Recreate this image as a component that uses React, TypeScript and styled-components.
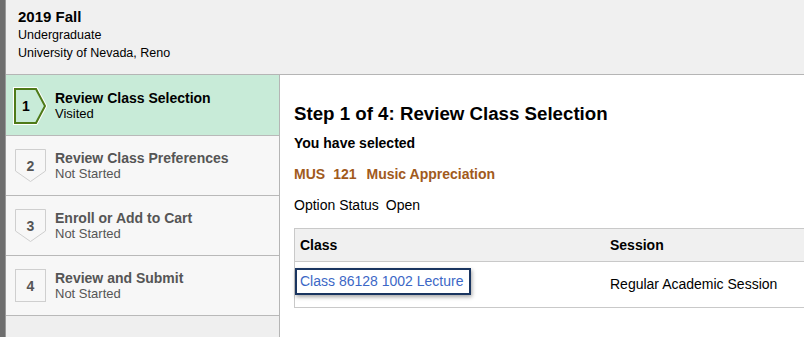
import React from "react";
import styled, { createGlobalStyle } from "styled-components";

const Global = createGlobalStyle`
  html, body { margin: 0; padding: 0; background: #ffffff; }
  body { font-family: Arial, "Liberation Sans", Helvetica, sans-serif; color: #000; }
`;

const Page = styled.div`
  display: flex;
  width: 804px;
  height: 337px;
  overflow: hidden;
`;

const SideStripe = styled.div`
  width: 5px;
  flex: 0 0 5px;
  background: #6e6e6e;
  border-right: 1px solid #9a9a9a;
`;

const Main = styled.div`
  flex: 1;
  display: flex;
  flex-direction: column;
  min-width: 0;
`;

const Header = styled.div`
  height: 75px;
  box-sizing: border-box;
  background: #f0f0f0;
  border-bottom: 1px solid #b5b5b5;
  padding: 8px 0 0 12px;
  flex: 0 0 auto;
`;

const Term = styled.div`
  font-weight: bold;
  font-size: 15px;
  line-height: 18px;
`;

const HeaderLine = styled.div`
  font-size: 12.5px;
  line-height: 18px;
`;

const Body = styled.div`
  display: flex;
  flex: 1;
  min-height: 0;
`;

const Nav = styled.div`
  width: 273px;
  flex: 0 0 273px;
  background: #efefef;
  border-right: 1px solid #b5b5b5;
  display: flex;
  flex-direction: column;
`;

const StepRow = styled.div<{ $active?: boolean }>`
  height: ${(p) => (p.$active ? "61px" : "60px")};
  box-sizing: border-box;
  display: flex;
  align-items: center;
  gap: 8px;
  padding-left: ${(p) => (p.$active ? "7px" : "9px")};
  padding-top: ${(p) => (p.$active ? "1px" : "0")};
  background: ${(p) => (p.$active ? "#c8ebd8" : "#f7f7f7")};
  border-bottom: 1px solid #b9b9b9;
  color: ${(p) => (p.$active ? "#000" : "#555")};
`;

const Badge = styled.div<{ $w: number; $h: number }>`
  position: relative;
  width: ${(p) => p.$w}px;
  height: ${(p) => p.$h}px;
  flex: 0 0 auto;
  svg { position: absolute; inset: 0; }
`;

const BadgeNum = styled.span<{ $w: number; $top: number }>`
  position: absolute;
  left: 0;
  top: ${(p) => p.$top}px;
  width: ${(p) => p.$w}px;
  text-align: center;
  font-weight: bold;
  font-size: 14px;
  line-height: 16px;
`;

const StepText = styled.div`
  display: flex;
  flex-direction: column;
`;

const StepTitle = styled.div`
  font-weight: bold;
  font-size: 14px;
  line-height: 16px;
`;

const StepStatus = styled.div`
  font-size: 13px;
  line-height: 15px;
`;

const Content = styled.div`
  flex: 1;
  min-width: 0;
  background: #fff;
  padding: 27px 0 0 14px;
`;

const Title = styled.h1`
  margin: 0;
  font-size: 18.7px;
  line-height: 23px;
  font-weight: bold;
`;

const Selected = styled.div`
  margin-top: 10px;
  font-size: 14px;
  font-weight: bold;
  line-height: 16px;
`;

const Course = styled.div`
  display: flex;
  margin-top: 15px;
  font-size: 14px;
  font-weight: bold;
  color: #a15a1c;
  line-height: 16px;
`;

const CoursePart = styled.span<{ $gap: number }>`
  margin-right: ${(p) => p.$gap}px;
`;

const Option = styled.div`
  display: flex;
  gap: 7px;
  margin-top: 15px;
  font-size: 14px;
  line-height: 16px;
`;

const Table = styled.div`
  margin-top: 15px;
  border: 1px solid #c9c9c9;
  border-right: none;
  width: 520px;
`;

const TRow = styled.div<{ $head?: boolean }>`
  display: grid;
  grid-template-columns: 309px 1fr;
  align-items: center;
  height: ${(p) => (p.$head ? "32px" : "45px")};
  background: ${(p) => (p.$head ? "#f0f0f0" : "#fff")};
  border-bottom: ${(p) => (p.$head ? "1px solid #c9c9c9" : "none")};
  font-size: 14px;
  font-weight: ${(p) => (p.$head ? "bold" : "normal")};
`;

const Cell = styled.div<{ $pad: number }>`
  padding-left: ${(p) => p.$pad}px;
  padding-bottom: 1px;
`;

const LinkBox = styled.a`
  display: inline-block;
  margin-top: -5px;
  padding: 3px 6px 4px 3px;
  border: 2px solid #1a3560;
  box-shadow: 1px 2px 4px rgba(0, 0, 0, 0.35);
  color: #3c67c6;
  text-decoration: none;
  font-size: 14px;
  line-height: 16px;
`;

function ActiveBadge() {
  return (
    <Badge $w={34} $h={38}>
      <svg width="34" height="38" viewBox="0 0 34 38">
        <polygon points="2,2 23,2 32,19 23,36 2,36" fill="#c8ebd8" stroke="#fff" strokeWidth="4" strokeLinejoin="miter" />
        <polygon points="2,2 23,2 32,19 23,36 2,36" fill="#c8ebd8" stroke="#4e7a18" strokeWidth="2" strokeLinejoin="miter" />
      </svg>
      <BadgeNum $w={26} $top={11}>1</BadgeNum>
    </Badge>
  );
}

function ArrowBadge({ n }: { n: number }) {
  return (
    <Badge $w={32} $h={34}>
      <svg width="32" height="34" viewBox="0 0 32 34">
        <polygon points="0.5,0.5 30.5,0.5 30.5,22 15.5,32.5 0.5,22" fill="#f7f7f7" stroke="#cfcfcf" strokeWidth="1" />
      </svg>
      <BadgeNum $w={31} $top={9}>{n}</BadgeNum>
    </Badge>
  );
}

function BoxBadge({ n }: { n: number }) {
  return (
    <Badge $w={32} $h={34}>
      <svg width="32" height="34" viewBox="0 0 32 34">
        <rect x="0.5" y="0.5" width="30" height="32" fill="#f7f7f7" stroke="#cfcfcf" strokeWidth="1" />
      </svg>
      <BadgeNum $w={31} $top={9}>{n}</BadgeNum>
    </Badge>
  );
}

export default function App() {
  return (
    <>
      <Global />
      <Page>
        <SideStripe />
        <Main>
          <Header>
            <Term>2019 Fall</Term>
            <HeaderLine>Undergraduate</HeaderLine>
            <HeaderLine>University of Nevada, Reno</HeaderLine>
          </Header>
          <Body>
            <Nav>
              <StepRow $active>
                <ActiveBadge />
                <StepText>
                  <StepTitle>Review Class Selection</StepTitle>
                  <StepStatus>Visited</StepStatus>
                </StepText>
              </StepRow>
              <StepRow>
                <ArrowBadge n={2} />
                <StepText>
                  <StepTitle>Review Class Preferences</StepTitle>
                  <StepStatus>Not Started</StepStatus>
                </StepText>
              </StepRow>
              <StepRow>
                <ArrowBadge n={3} />
                <StepText>
                  <StepTitle>Enroll or Add to Cart</StepTitle>
                  <StepStatus>Not Started</StepStatus>
                </StepText>
              </StepRow>
              <StepRow>
                <BoxBadge n={4} />
                <StepText>
                  <StepTitle>Review and Submit</StepTitle>
                  <StepStatus>Not Started</StepStatus>
                </StepText>
              </StepRow>
            </Nav>
            <Content>
              <Title>Step 1 of 4: Review Class Selection</Title>
              <Selected>You have selected</Selected>
              <Course>
                <CoursePart $gap={8}>MUS</CoursePart>
                <CoursePart $gap={10}>121</CoursePart>
                <CoursePart $gap={0}>Music Appreciation</CoursePart>
              </Course>
              <Option>
                <span>Option Status</span>
                <span>Open</span>
              </Option>
              <Table>
                <TRow $head>
                  <Cell $pad={5}>Class</Cell>
                  <Cell $pad={6}>Session</Cell>
                </TRow>
                <TRow>
                  <Cell $pad={0}>
                    <LinkBox href="#">Class 86128 1002 Lecture</LinkBox>
                  </Cell>
                  <Cell $pad={6}>Regular Academic Session</Cell>
                </TRow>
              </Table>
            </Content>
          </Body>
        </Main>
      </Page>
    </>
  );
}
